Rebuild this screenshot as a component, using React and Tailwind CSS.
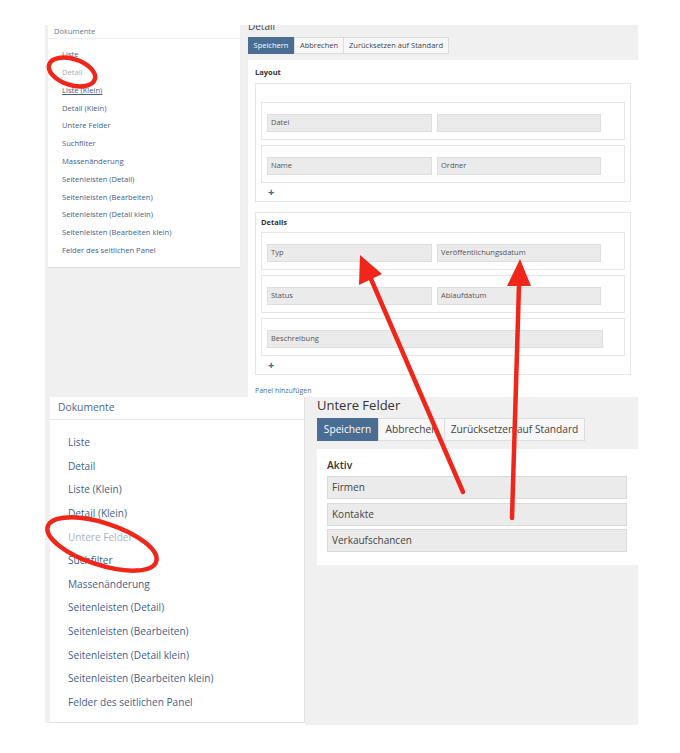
import React from "react";

const menuItems = [
  "Liste",
  "Detail",
  "Liste (Klein)",
  "Detail (Klein)",
  "Untere Felder",
  "Suchfilter",
  "Massenänderung",
  "Seitenleisten (Detail)",
  "Seitenleisten (Bearbeiten)",
  "Seitenleisten (Detail klein)",
  "Seitenleisten (Bearbeiten klein)",
  "Felder des seitlichen Panel",
];

const SmallField = ({ label, className = "w-[165px]" }) => (
  <div className={`h-[18px] ${className} bg-[#ebebeb] border border-[#dedede] flex items-center px-[3px] text-[7.5px] text-[#555]`}>
    {label}
  </div>
);

const SmallRow = ({ children }) => (
  <div className="h-[38px] border border-[#e6e6e6] flex items-start pt-[11px] gap-[5px] px-[5px]">
    {children}
  </div>
);

const Plus = () => (
  <div className="h-[18px] flex items-center pl-[7px] text-[#3b6799] font-bold text-[11px]">+</div>
);

const TopScreenshot = () => (
  <div className="h-[372px] bg-[#f0f0f0] flex overflow-hidden">
    {/* left menu */}
    <div className="pl-[3px]">
      <div className="w-[192px] h-[242px] bg-white shadow-[0_1px_1px_rgba(0,0,0,0.06)]">
        <div className="h-[14px] border-b border-[#ececec] pl-[6px] flex items-center text-[7.5px] text-[#5f7896]">
          Dokumente
        </div>
        <div className="pt-[7px] pl-[14px]">
          {menuItems.map((item, i) => (
            <div
              key={item}
              className={`h-[17.8px] flex items-center text-[7.6px] ${
                i === 1 ? "text-[#a4adb8]" : "text-[#40618a]"
              } ${i === 2 ? "underline" : ""}`}
            >
              {item}
            </div>
          ))}
        </div>
      </div>
    </div>

    {/* detail editor */}
    <div className="w-[398px] flex flex-col">
      <div className="h-[35px] pl-[8px]">
        <div className="h-[12px] overflow-hidden">
          <div className="-mt-[6px] text-[10px] leading-[14px] text-[#444]">Detail</div>
        </div>
        <div className="flex h-[17px] text-[7.5px]">
          <div className="w-[46px] bg-[#4a6d93] text-white flex items-center justify-center">Speichern</div>
          <div className="w-[50px] bg-[#f7f7f7] border border-[#dcdcdc] text-[#444] flex items-center justify-center">Abbrechen</div>
          <div className="w-[105px] bg-[#f7f7f7] border border-l-0 border-[#dcdcdc] text-[#444] flex items-center justify-center">
            Zurücksetzen auf Standard
          </div>
        </div>
      </div>
      <div className="ml-[8px] flex-1 bg-white pl-[7px] pt-[8px]">
        <div className="h-[10px] flex items-center text-[7.5px] font-bold text-[#333]">Layout</div>
        <div className="mt-[5px] w-[376px] border border-[#e6e6e6] px-[5px] pt-[18px]">
          <div className="flex flex-col gap-[5px]">
            <SmallRow>
              <SmallField label="Datei" />
              <SmallField label="" className="w-[164px]" />
            </SmallRow>
            <SmallRow>
              <SmallField label="Name" />
              <SmallField label="Ordner" className="w-[164px]" />
            </SmallRow>
          </div>
          <Plus />
        </div>
        <div className="mt-[10px] w-[376px] border border-[#e6e6e6] px-[5px]">
          <div className="h-[19px] flex items-center text-[7.5px] font-bold text-[#333]">Details</div>
          <div className="flex flex-col gap-[5px]">
            <SmallRow>
              <SmallField label="Typ" />
              <SmallField label="Veröffentlichungsdatum" className="w-[164px]" />
            </SmallRow>
            <SmallRow>
              <SmallField label="Status" />
              <SmallField label="Ablaufdatum" className="w-[164px]" />
            </SmallRow>
            <SmallRow>
              <SmallField label="Beschreibung" className="w-[336px]" />
            </SmallRow>
          </div>
          <Plus />
        </div>
        <div className="mt-[10px] h-[12px] flex items-center text-[7px] text-[#4a6f99]">Panel hinzufügen</div>
      </div>
    </div>
  </div>
);

const BottomScreenshot = () => (
  <div className="h-[328px] flex">
    <div className="w-[5px] h-[326px] bg-[#f0f0f0]" />
    <div className="w-[255px] h-[326px] bg-white border-b border-r border-[#e2e2e2]">
      <div className="h-[23px] border-b border-[#e8e8e8] pl-[8px] flex items-center text-[10.3px] text-[#4d6585]">
        Dokumente
      </div>
      <div className="pt-[11px] pl-[18px]">
        {menuItems.map((item, i) => (
          <div
            key={item}
            className={`h-[23.6px] flex items-center text-[10.1px] ${
              i === 4 ? "text-[#a9b3bf]" : "text-[#3f5f88]"
            }`}
          >
            {item}
          </div>
        ))}
      </div>
    </div>
    <div className="w-[333px] h-[328px] bg-[#f0f0f0] pl-[12px]">
      <div className="h-[17px] flex items-center text-[13px] text-[#333]">Untere Felder</div>
      <div className="mt-[4px] flex h-[23px] text-[10.2px]">
        <div className="w-[61px] bg-[#4a6d93] text-white flex items-center justify-center">Speichern</div>
        <div className="w-[67px] bg-[#f7f7f7] border border-[#dcdcdc] text-[#444] flex items-center justify-center">Abbrechen</div>
        <div className="w-[140px] bg-[#f7f7f7] border border-l-0 border-[#dcdcdc] text-[#444] flex items-center justify-center">
          Zurücksetzen auf Standard
        </div>
      </div>
      <div className="mt-[8px] w-[321px] h-[116px] bg-white pl-[10px] pt-[10px]">
        <div className="h-[14px] flex items-center text-[10.3px] font-semibold text-[#333]">Aktiv</div>
        <div className="mt-[3px] flex flex-col gap-[3.5px]">
          {["Firmen", "Kontakte", "Verkaufschancen"].map((f) => (
            <div
              key={f}
              className="w-[300px] h-[23px] bg-[#ebebeb] border border-[#dadada] flex items-center pl-[4px] text-[10px] text-[#444]"
            >
              {f}
            </div>
          ))}
        </div>
      </div>
    </div>
  </div>
);

const Annotations = () => (
  <svg className="absolute inset-0 pointer-events-none" width="680" height="753" viewBox="0 0 680 753">
    <g fill="none" stroke="#f0261a" strokeWidth="4.5">
      <ellipse cx="72" cy="72" rx="24" ry="13" transform="rotate(18 72 72)" />
      <ellipse cx="102" cy="544" rx="57" ry="21" transform="rotate(18 102 544)" />
    </g>
    <g stroke="#f0261a" strokeWidth="4.5" strokeLinecap="round">
      <line x1="463" y1="492" x2="371" y2="279" />
      <line x1="512" y1="518" x2="519" y2="285" />
    </g>
    <g fill="#f0261a">
      <polygon points="360,255 382,274 359,285" />
      <polygon points="520,259 531,286 507,286" />
    </g>
  </svg>
);

export default function App() {
  return (
    <div className="relative w-[680px] h-[753px] bg-white font-['Open_Sans',sans-serif] overflow-hidden">
      <div className="pt-[25px] pl-[45px] w-[638px]">
        <TopScreenshot />
        <BottomScreenshot />
      </div>
      <Annotations />
    </div>
  );
}
